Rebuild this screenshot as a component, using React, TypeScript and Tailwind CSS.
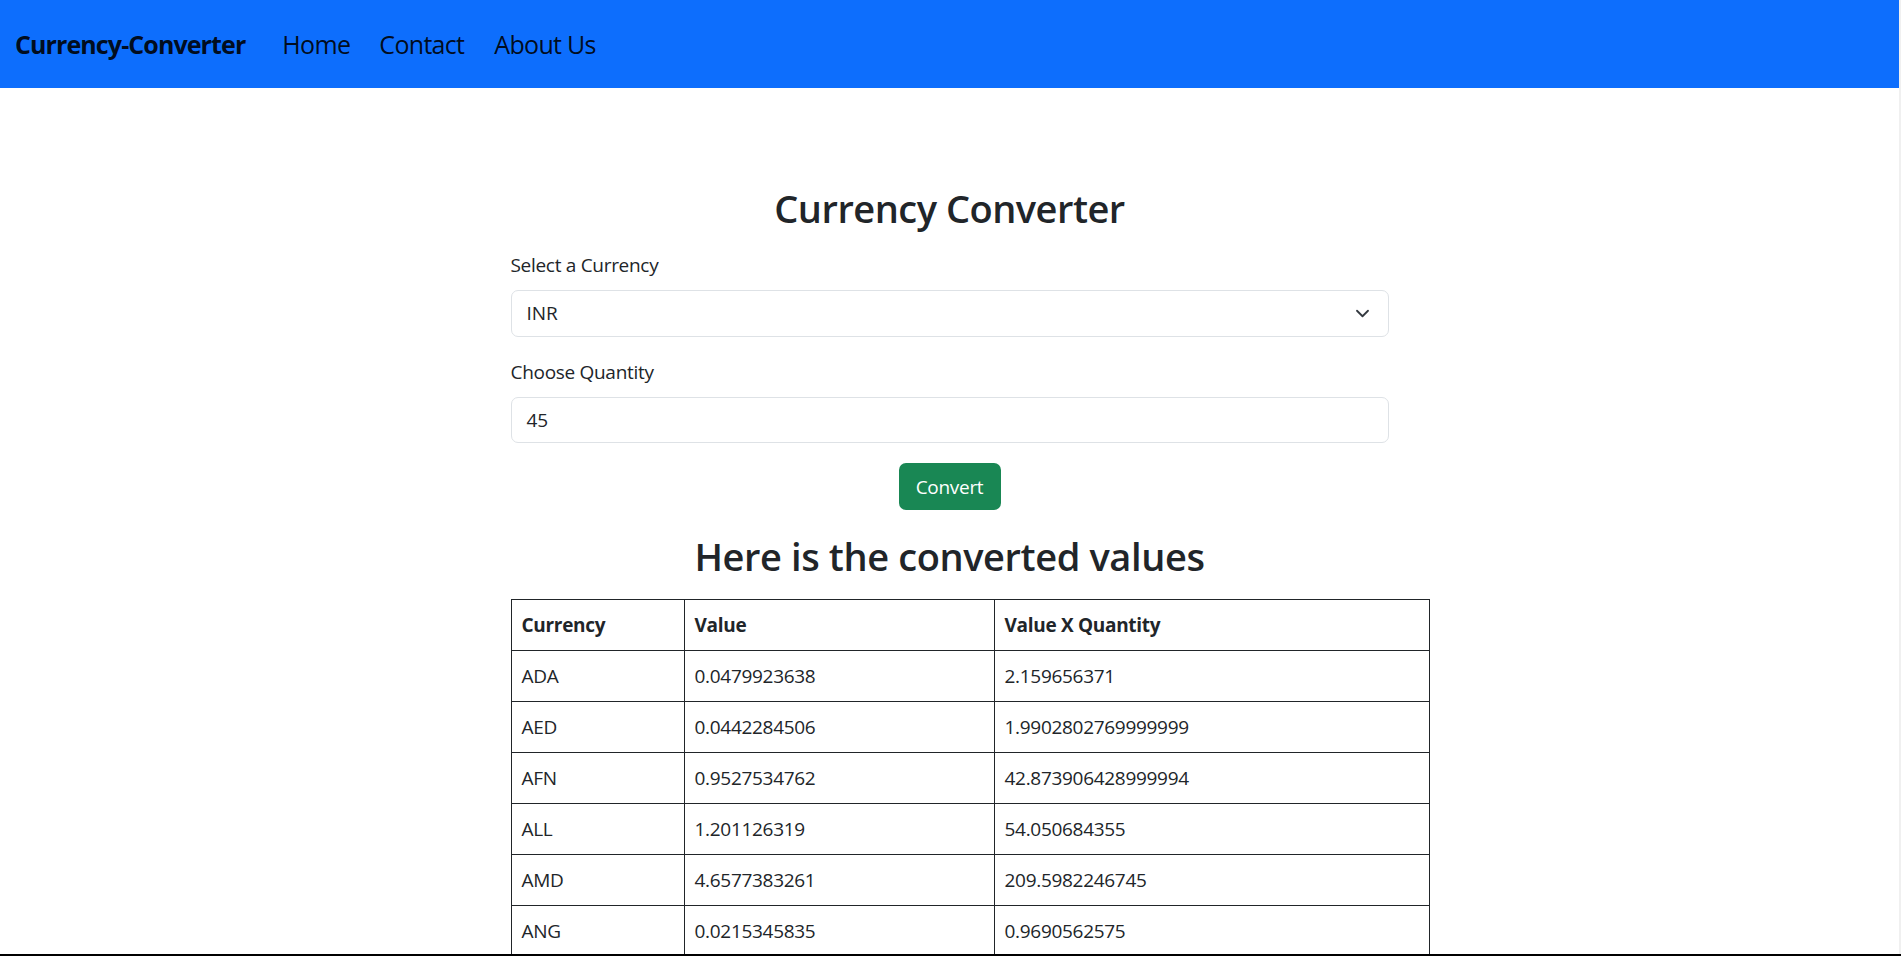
import React from 'react';

type Rate = { code: string; value: string; total: string };

const rates: Rate[] = [
  { code: 'ADA', value: '0.0479923638', total: '2.159656371' },
  { code: 'AED', value: '0.0442284506', total: '1.9902802769999999' },
  { code: 'AFN', value: '0.9527534762', total: '42.873906428999994' },
  { code: 'ALL', value: '1.201126319', total: '54.050684355' },
  { code: 'AMD', value: '4.6577383261', total: '209.5982246745' },
  { code: 'ANG', value: '0.0215345835', total: '0.9690562575' },
];

const cellClass = 'border border-[#212529] px-[10px] py-[10px] leading-[30px] text-left';

const Navbar = () => (
  <nav className="flex h-[88px] items-center bg-[#0d6efd] pl-[15px] pt-[2px] text-black/90">
    <span className="text-[25px] font-bold tracking-[-0.9px]">Currency-Converter</span>
    <ul className="ml-[37px] flex text-[25px] font-normal tracking-[-0.7px]">
      <li className="w-[97px]">Home</li>
      <li className="w-[115px]">Contact</li>
      <li>About Us</li>
    </ul>
  </nav>
);

export default function App() {
  return (
    <div
      className="flex h-[956px] overflow-hidden border-b-2 border-black bg-white text-[#212529]"
      style={{ fontFamily: '"Open Sans", "Noto Sans", sans-serif' }}
    >
      <div className="flex-1">
        <Navbar />
        <main className="mx-auto w-[878px] pt-[96px]">
          <h2 className="text-center text-[38px] font-semibold leading-[48px] tracking-[-0.5px]">Currency Converter</h2>

          <label className="mt-[18px] block text-[19px] leading-[30px] tracking-[-0.3px]">Select a Currency</label>
          <div className="mt-[10px] flex h-[47px] items-center justify-between rounded-[7px] border border-[#dee2e6] pl-[15px] pr-[18px] text-[19px]">
            <span>INR</span>
            <svg width="15" height="11" viewBox="0 0 16 12" fill="none">
              <path d="M2 3l6 6 6-6" stroke="#343a40" strokeWidth="2" strokeLinecap="round" strokeLinejoin="round" />
            </svg>
          </div>

          <label className="mt-[20px] block text-[19px] leading-[30px] tracking-[-0.3px]">Choose Quantity</label>
          <div className="mt-[10px] flex h-[46px] items-center rounded-[7px] border border-[#dee2e6] px-[15px] text-[19px]">
            45
          </div>

          <div className="mt-[20px] flex justify-center">
            <button className="h-[47px] w-[102px] rounded-[7px] bg-[#198754] pt-[2px] text-[19px] text-white tracking-[-0.3px]">
              Convert
            </button>
          </div>

          <h2 className="mt-[22px] text-center text-[38px] font-semibold leading-[48px] tracking-[-0.4px]">
            Here is the converted values
          </h2>

          <table className="mt-[19px] w-[918px] table-fixed border-collapse text-[19px] tracking-[-0.3px]">
            <colgroup>
              <col className="w-[173px]" />
              <col className="w-[310px]" />
              <col className="w-[435px]" />
            </colgroup>
            <thead>
              <tr className="font-bold">
                <th className={cellClass}>Currency</th>
                <th className={cellClass}>Value</th>
                <th className={cellClass}>Value X Quantity</th>
              </tr>
            </thead>
            <tbody>
              {rates.map((rate) => (
                <tr key={rate.code}>
                  <td className={cellClass}>{rate.code}</td>
                  <td className={cellClass}>{rate.value}</td>
                  <td className={cellClass}>{rate.total}</td>
                </tr>
              ))}
            </tbody>
          </table>
        </main>
      </div>
      <div className="w-[2px] bg-[#f0f0f0]" />
    </div>
  );
}
